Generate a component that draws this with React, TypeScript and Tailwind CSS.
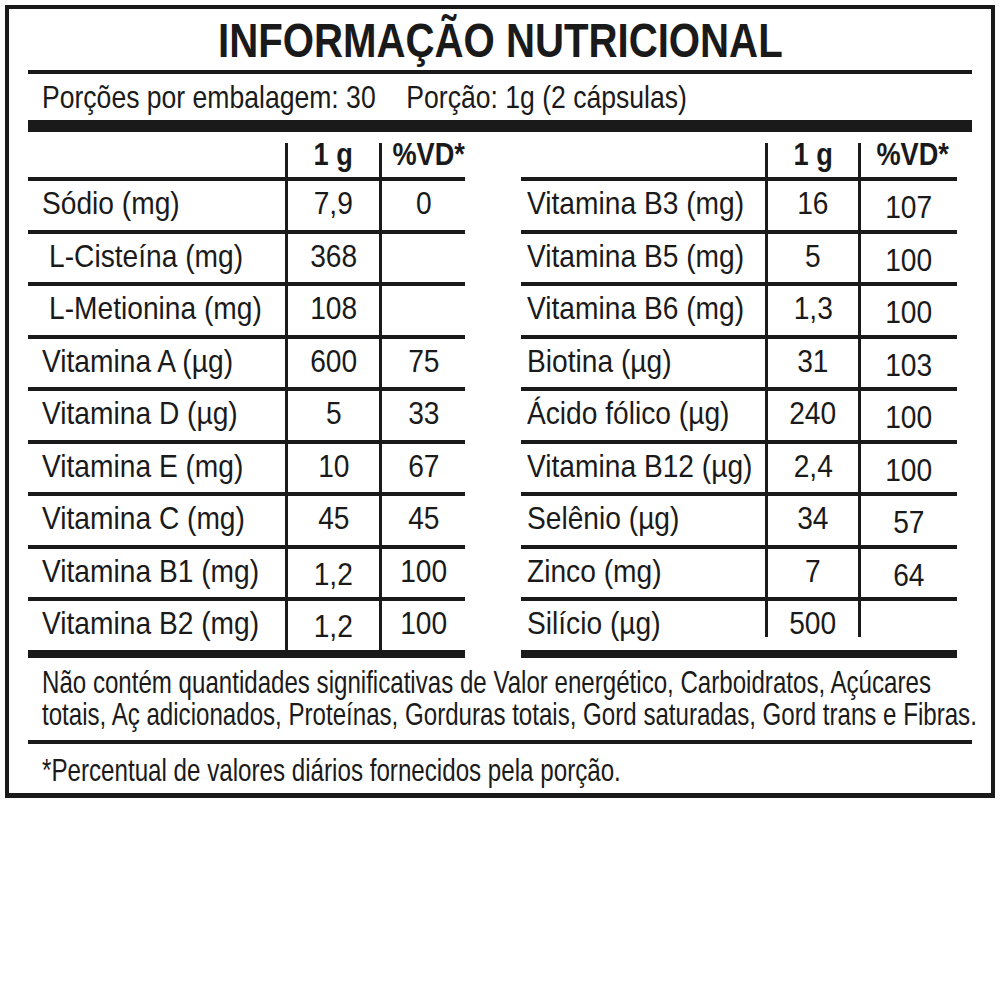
import React from "react";

type Row = { name: string; amount: string; vd: string; indent?: boolean };

const leftRows: Row[] = [
  { name: "Sódio (mg)", amount: "7,9", vd: "0" },
  { name: "L-Cisteína (mg)", amount: "368", vd: "", indent: true },
  { name: "L-Metionina (mg)", amount: "108", vd: "", indent: true },
  { name: "Vitamina A (µg)", amount: "600", vd: "75" },
  { name: "Vitamina D (µg)", amount: "5", vd: "33" },
  { name: "Vitamina E (mg)", amount: "10", vd: "67" },
  { name: "Vitamina C (mg)", amount: "45", vd: "45" },
  { name: "Vitamina B1 (mg)", amount: "1,2", vd: "100" },
  { name: "Vitamina B2 (mg)", amount: "1,2", vd: "100" },
];

const rightRows: Row[] = [
  { name: "Vitamina B3 (mg)", amount: "16", vd: "107" },
  { name: "Vitamina B5 (mg)", amount: "5", vd: "100" },
  { name: "Vitamina B6 (mg)", amount: "1,3", vd: "100" },
  { name: "Biotina (µg)", amount: "31", vd: "103" },
  { name: "Ácido fólico (µg)", amount: "240", vd: "100" },
  { name: "Vitamina B12 (µg)", amount: "2,4", vd: "100" },
  { name: "Selênio (µg)", amount: "34", vd: "57" },
  { name: "Zinco (mg)", amount: "7", vd: "64" },
  { name: "Silício (µg)", amount: "500", vd: "" },
];

// condensed look: Arial-width font squeezed horizontally
const Narrow: React.FC<{ children: React.ReactNode; center?: boolean; scale?: string }> = ({
  children,
  center,
  scale = "scale-x-[0.88]",
}) => (
  <span className={`inline-block whitespace-nowrap ${scale} ${center ? "origin-center" : "origin-left"}`}>
    {children}
  </span>
);

interface TableProps {
  rows: Row[];
  side: "left" | "right";
}

const NutrientTable: React.FC<TableProps> = ({ rows, side }) => {
  const isLeft = side === "left";
  const nameW = isLeft ? "w-[257px] pl-[14px]" : "w-[244px] pl-[6px]";
  const amountW = isLeft ? "w-[91px]" : "w-[90px]";
  const vdW = isLeft ? "w-[83px]" : "w-[96px]";

  return (
    <div className={isLeft ? "w-[437px]" : "w-[436px]"}>
      {/* header */}
      <div className="flex h-[45px]">
        <div className={nameW} />
        <div className="w-[3px] h-[34px] self-end bg-[#1a1a1a]" />
        <div className={`${amountW} text-center font-bold leading-[44px]`}>
          <Narrow center scale="scale-x-[0.85]">1 g</Narrow>
        </div>
        <div className="w-[3px] h-[34px] self-end bg-[#1a1a1a]" />
        <div className={`${vdW} text-center font-bold leading-[44px] ${isLeft ? "pl-[4px]" : "pl-[8px]"}`}>
          <Narrow center scale="scale-x-[0.85]">%VD*</Narrow>
        </div>
      </div>

      {rows.map((row, i) => {
        const last = i === rows.length - 1;
        const shortLines = last && !isLeft;
        return (
          <div key={row.name}>
            <div className="h-[4px] bg-[#1a1a1a]" />
            <div className="flex h-[48.5px] leading-[45px]">
              <div className={`${nameW} ${row.indent ? "pl-[21px]" : ""}`}>
                <Narrow>{row.name}</Narrow>
              </div>
              <div className={`w-[3px] bg-[#1a1a1a] ${shortLines ? "h-[36px]" : ""}`} />
              <div className={`${amountW} text-center ${isLeft && i >= 7 ? "pt-[3px]" : ""}`}>
                <Narrow center>{row.amount}</Narrow>
              </div>
              <div className={`w-[3px] bg-[#1a1a1a] ${shortLines ? "h-[36px]" : ""}`} />
              <div className={`${vdW} text-center ${isLeft ? "" : "pt-[4px]"}`}>
                <Narrow center>{row.vd}</Narrow>
              </div>
            </div>
          </div>
        );
      })}
      <div className="h-[8px] bg-[#1a1a1a]" />
    </div>
  );
};

export default function App() {
  return (
    <div className="w-[1000px] h-[1000px] overflow-hidden bg-white pt-[5px] pl-[5px] text-[#1a1a1a] font-['Liberation_Sans',Arial,sans-serif] text-[32px]">
      <div className="w-[990px] border-[4px] border-b-[5px] border-[#1a1a1a] px-[19px]">
        <div className="h-[61px] pt-[2px] leading-[59px] text-center text-[49px] font-bold">
          <Narrow center scale="scale-x-[0.82]">INFORMAÇÃO NUTRICIONAL</Narrow>
        </div>
        <div className="h-[4px] bg-[#1a1a1a]" />
        <div className="h-[46px] leading-[46px] pl-[14px]">
          <Narrow scale="scale-x-[0.83]">
            Porções por embalagem: 30<span className="pl-[37px]">Porção: 1g (2 cápsulas)</span>
          </Narrow>
        </div>
        <div className="h-[12px] bg-[#1a1a1a]" />

        <div className="flex gap-[56px]">
          <NutrientTable rows={leftRows} side="left" />
          <NutrientTable rows={rightRows} side="right" />
        </div>

        <div className="pt-[8.5px] pl-[14px] leading-[32px]">
          <Narrow scale="scale-x-[0.753]">
            Não contém quantidades significativas de Valor energético, Carboidratos, Açúcares
            <br />
            totais, Aç adicionados, Proteínas, Gorduras totais, Gord saturadas, Gord trans e Fibras.
          </Narrow>
        </div>
        <div className="mt-[10px] h-[4px] bg-[#1a1a1a]" />
        <div className="h-[49px] pt-[3px] leading-[46px] pl-[14px]">
          <Narrow scale="scale-x-[0.755]">*Percentual de valores diários fornecidos pela porção.</Narrow>
        </div>
      </div>
    </div>
  );
}
